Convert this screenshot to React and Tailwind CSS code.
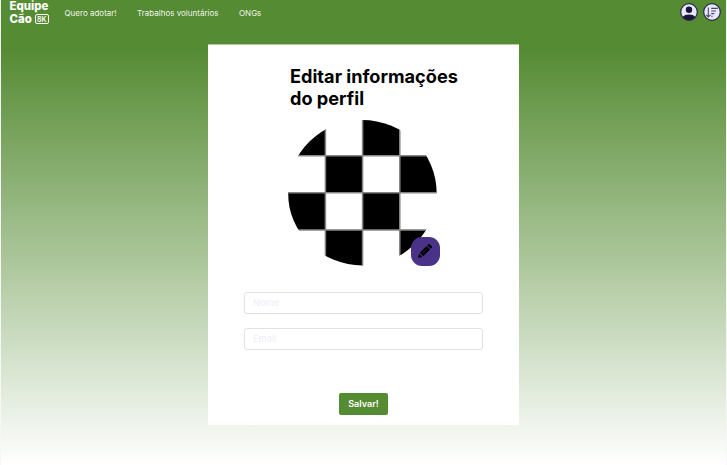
const links = ['Quero adotar!', 'Trabalhos voluntários', 'ONGs'];

function ProfileIcon() {
  return (
    <svg className="size-[18px]" viewBox="0 0 18 18" aria-hidden="true">
      <circle cx="9" cy="9" r="8.3" fill="#e9e7fb" />
      <circle cx="9" cy="6.7" r="3.2" fill="#1b1638" />
      <path d="M2.5 14.2C4 12 6.4 11.4 9 11.4s5 .6 6.5 2.8A8.3 8.3 0 0 1 9 17.3a8.3 8.3 0 0 1-6.5-3.1Z" fill="#1b1638" />
      <circle cx="9" cy="9" r="8.3" fill="none" stroke="#2c2650" strokeWidth="1.2" />
    </svg>
  );
}

function SortIcon() {
  return (
    <svg className="size-[18px]" viewBox="0 0 18 18" fill="none" aria-hidden="true">
      <circle cx="9" cy="9" r="8.3" fill="#e9e7fb" stroke="#2c2650" strokeWidth="1.2" />
      <path d="M5.3 4.4v9M3.2 11.8l2.1 2.1 2.1-2.1M8.2 5.4h6.6M8.2 8h4.8M8.2 10.6h3.2M8.2 13.2h1.5" stroke="#4a4568" strokeWidth="1.1" />
    </svg>
  );
}

const dark = [[0, 0], [2, 0], [1, 1], [3, 1], [0, 2], [2, 2], [1, 3], [3, 3]];

function Avatar() {
  return (
    <svg className="block h-[146px] w-[150px]" viewBox="0 0 150 146" aria-hidden="true">
      <defs>
        <clipPath id="avatar">
          <ellipse cx="74.3" cy="72.7" rx="74.3" ry="72.7" />
        </clipPath>
      </defs>
      <g clipPath="url(#avatar)">
        <rect width="150" height="146" fill="#fff" />
        {dark.map(([c, r]) => (
          <rect key={`${c}-${r}`} x={c * 37.2 + 0.2} y={r * 37.1 - 1.4} width="37.2" height="37.1" fill="#000" />
        ))}
        <path d="M37.4 0v146M74.6 0v146M111.8 0v146M0 35.7h150M0 72.8h150M0 109.9h150" stroke="#858585" strokeWidth="1.5" />
      </g>
    </svg>
  );
}

function Pencil() {
  return (
    <svg className="size-[16px]" viewBox="0 0 16 16" fill="#000" aria-hidden="true">
      <path d="m1 15 1.1-4.3 3.2 3.2L1 15Zm1.8-5.2 6.8-6.8 3.4 3.4-6.8 6.8-3.4-3.4Zm7.5-7.4 1-1c.6-.6 1.2-.5 1.7 0l1.7 1.7c.5.5.5 1.1 0 1.7l-1 1-3.4-3.4Z" />
      <path d="m5.6 10.2 4.5-4.5" stroke="#4b3289" strokeWidth=".6" />
    </svg>
  );
}

const field =
  'block h-[22px] w-[239px] rounded-[3px] border border-[#dfe3e6] bg-white px-2 pb-px text-[9.3px] text-black outline-none placeholder:text-[#f0edfd] placeholder:opacity-100';

export default function App() {
  return (
    <div className="h-[465px] w-[727px] overflow-hidden bg-[#f7f7f7] px-px font-['Inter','Liberation_Sans',sans-serif]">
      <div className="flex h-full flex-col bg-[linear-gradient(to_bottom,#558b33_48px,#ffffff_465px)]">
        <header className="flex h-[44px] shrink-0 items-start pr-[5px] pl-[8.5px] text-white">
          <div className="w-[55px] text-[11.4px] leading-[14px] font-extrabold">
            <div className="-mt-px">Equipe</div>
            <div className="-mt-px flex items-center">
              Cão
              <span className="ml-[3px] flex h-[10px] w-[14px] items-center justify-center rounded-[2px] border border-white text-[7px] leading-none font-semibold">8K</span>
            </div>
          </div>
          <nav className="flex gap-[20.5px] pt-[6.5px] text-[8px] leading-[12px] text-[#eef4ea]">
            {links.map((l) => (
              <a key={l} href="#" className="whitespace-nowrap">{l}</a>
            ))}
          </nav>
          <div className="ml-auto flex gap-[5px] pt-[3px]">
            <ProfileIcon />
            <SortIcon />
          </div>
        </header>
        <main className="ml-[207px] flex h-[381px] w-[311px] shrink-0 flex-col border-t border-[#b5cda6] bg-white">
          <h1 className="mt-[20px] ml-[82px] text-[18.15px] leading-[22px] font-bold whitespace-nowrap text-black">
            Editar informações
            <br />
            do perfil
          </h1>
          <div className="relative mt-[11px] ml-[80px] h-[146px] w-[150px]">
            <Avatar />
            <button aria-label="Editar foto" className="absolute top-[117px] left-[123px] flex size-[28.5px] items-center justify-center rounded-[11px] bg-[#4b3289]">
              <Pencil />
            </button>
          </div>
          <form className="mt-[26px] flex flex-col items-center">
            <input className={field} placeholder="Nome" />
            <input className={`${field} mt-[14px]`} placeholder="Email" />
            <button type="button" className="mt-[43px] h-[22px] w-[49px] rounded-[2px] bg-[#558b33] text-[9.1px] font-semibold text-white">Salvar!</button>
          </form>
        </main>
      </div>
    </div>
  );
}
